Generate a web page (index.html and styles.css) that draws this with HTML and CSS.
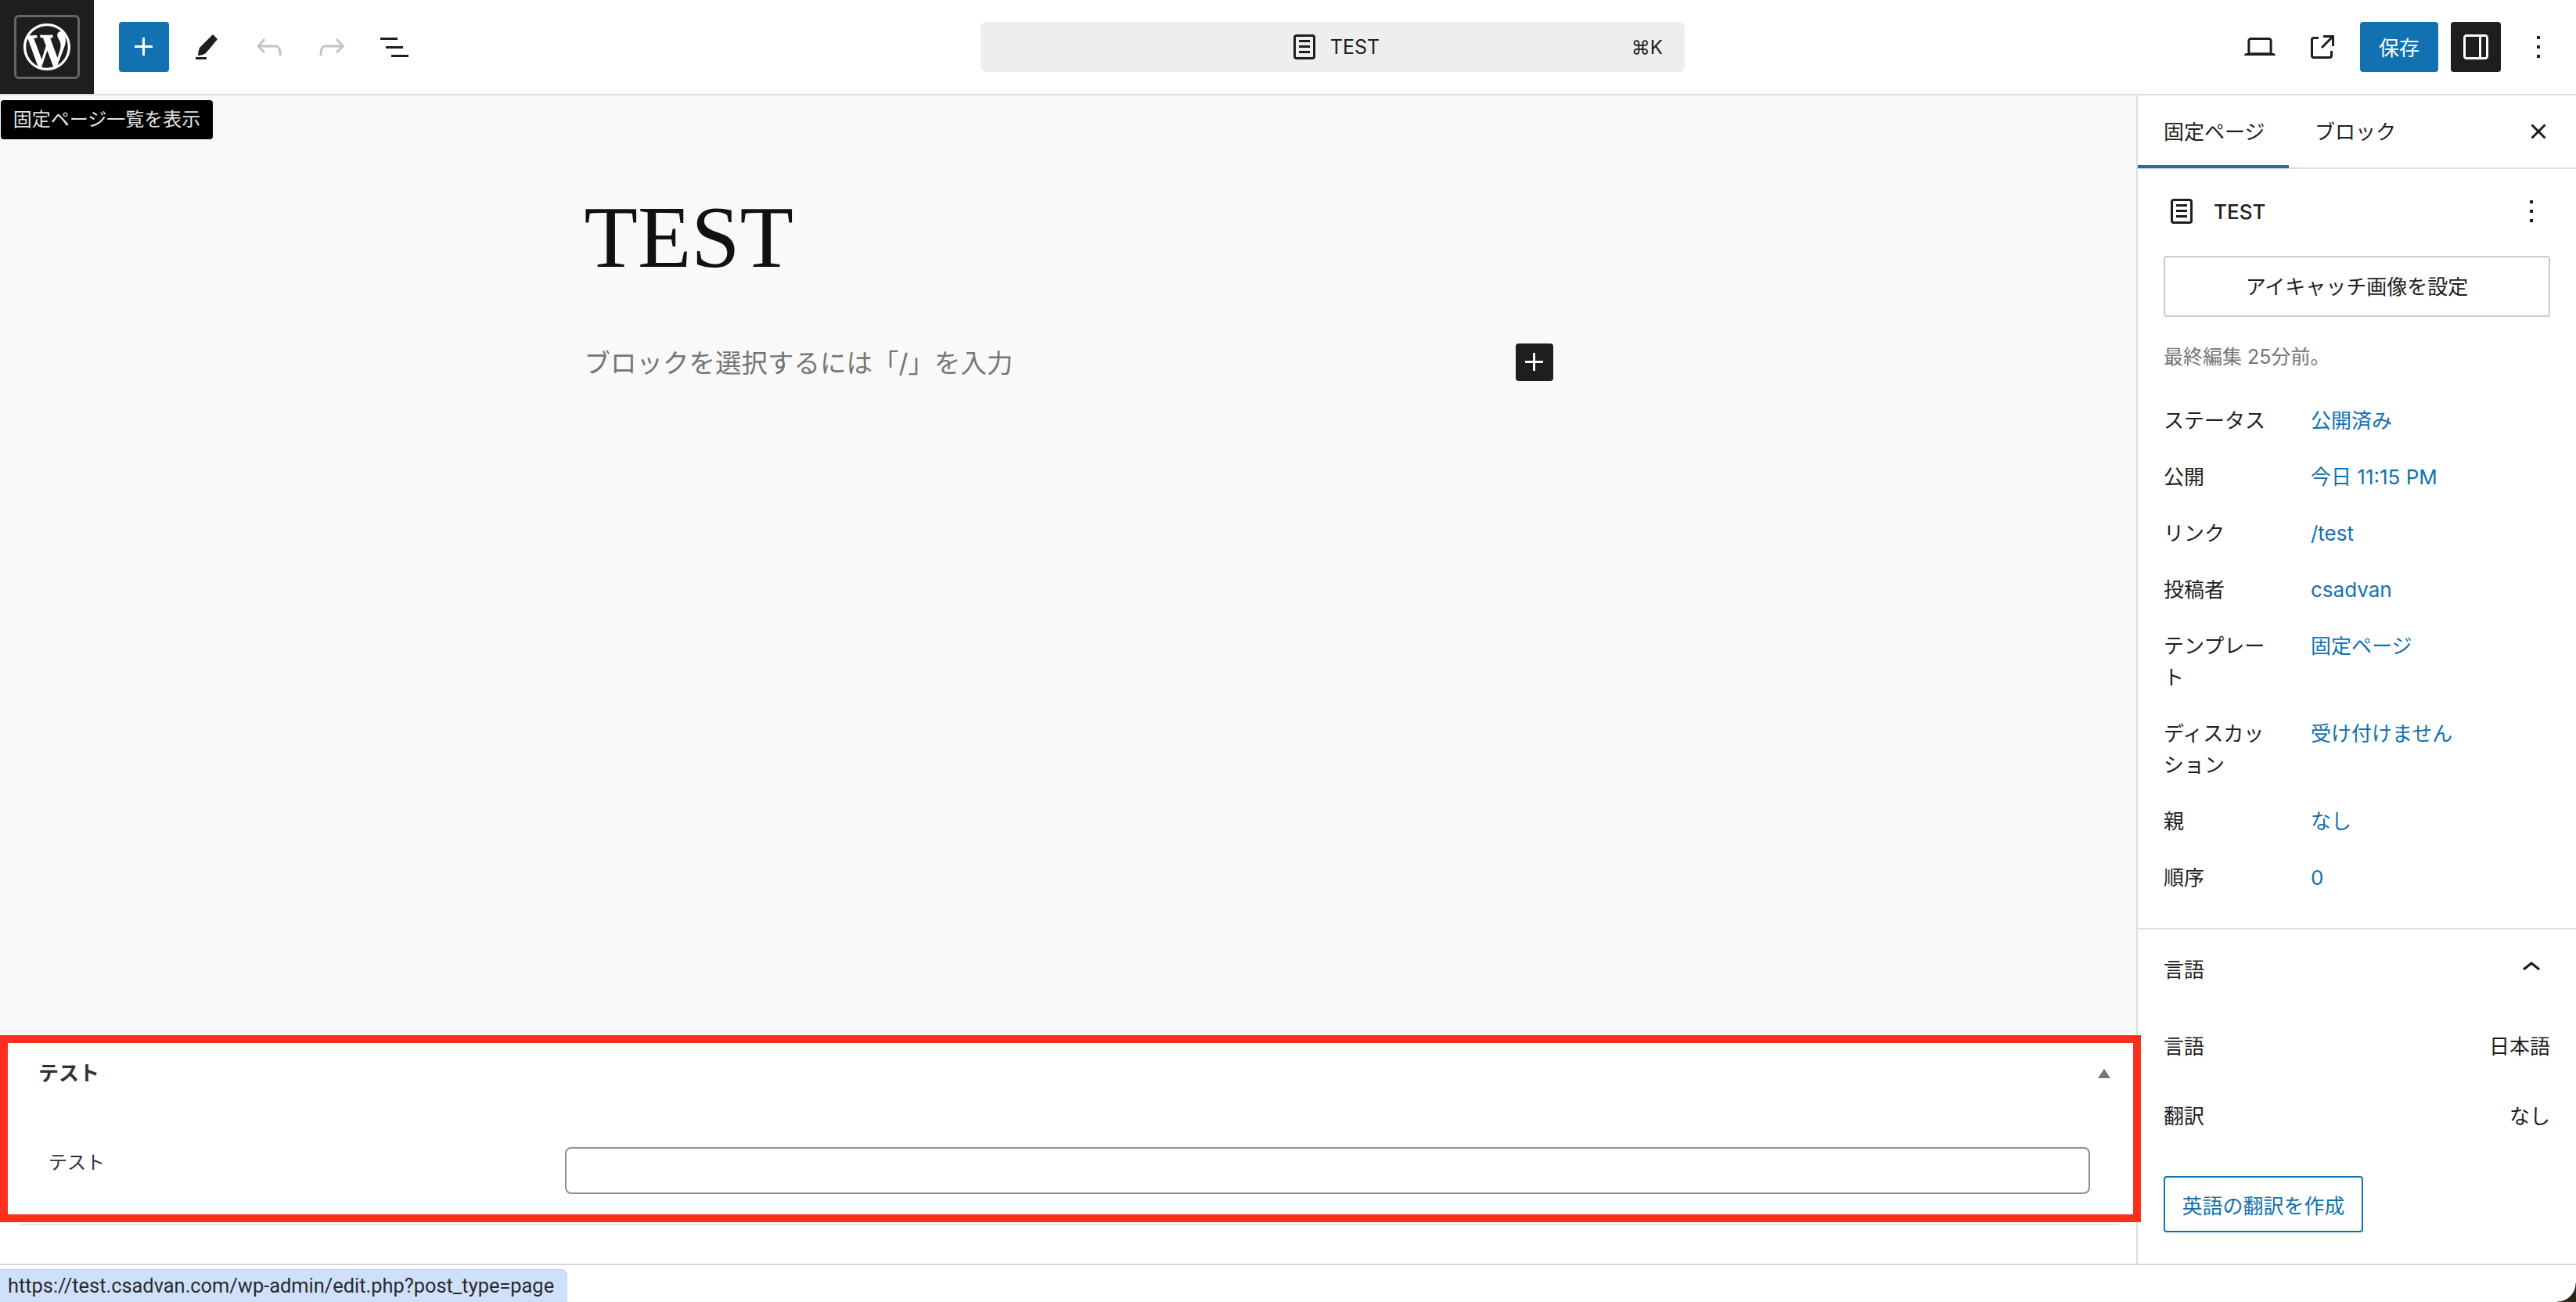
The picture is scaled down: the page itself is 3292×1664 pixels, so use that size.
FILE: index.html
```html
<!DOCTYPE html>
<html lang="ja">
<head>
    <meta charset="UTF-8">
    <title>TEST</title>
    <link rel="stylesheet" href="styles.css">
</head>
<body>
    <header class="topbar">
        <a class="site-logo">
            <span class="site-logo-box">
                <svg class="site-logo-mark" viewBox="0 0 20 20"><path d="M20 10c0-5.51-4.49-10-10-10C4.48 0 0 4.49 0 10c0 5.52 4.48 10 10 10 5.51 0 10-4.48 10-10zM7.78 15.37L4.37 6.22c.55-.02 1.17-.08 1.17-.08.5-.06.44-1.13-.06-1.11 0 0-1.45.11-2.37.11-.18 0-.37 0-.58-.01C4.12 2.69 6.87 1.11 10 1.11c2.33 0 4.45.87 6.05 2.34-.68-.11-1.65.39-1.65 1.58 0 .74.45 1.36.9 2.1.35.61.55 1.36.55 2.46 0 1.49-1.4 5-1.4 5l-3.03-8.37c.54-.02.82-.17.82-.17.5-.05.44-1.25-.06-1.22 0 0-1.44.12-2.38.12-.87 0-2.33-.12-2.33-.12-.5-.03-.56 1.2-.06 1.22l.92.08 1.26 3.41zM17.41 10c.24-.64.74-1.87.43-4.25.7 1.29 1.05 2.71 1.05 4.25 0 3.29-1.73 6.24-4.4 7.78.97-2.59 1.94-5.2 2.92-7.78zM6.1 18.09C3.12 16.65 1.11 13.53 1.11 10c0-1.3.23-2.48.72-3.59C3.25 10.3 4.67 14.2 6.1 18.09zm4.03-6.63l2.58 6.98c-.86.29-1.76.45-2.71.45-.79 0-1.57-.11-2.29-.33.81-2.38 1.62-4.74 2.42-7.1z"/></svg>
            </span>
        </a>
        <div class="tools">
            <button class="icon-btn icon-btn-primary"><svg viewBox="0 0 24 24"><path d="M11 12.5V17.5H12.5V12.5H17.5V11H12.5V6H11V11H6V12.5H11Z"/></svg></button>
            <button class="icon-btn"><svg viewBox="0 0 24 24"><path d="M16 4l3 3-7.5 9q-2 1.5-5 1.5 0-2.500 1-5zM5 18.500h7V20H5z"/></svg></button>
            <button class="icon-btn icon-btn-off"><svg viewBox="0 0 24 24"><path d="M18.3 11.700c-.6-.6-1.400-.9-2.300-.9H6.700l2.900-3.300-1.100-1-4.500 5L8.500 16l1-1-2.700-2.700H16c.5 0 .9.2 1.300.5 1 1 1 3.400 1 4.500v.3h1.500v-.2c0-1.500 0-4.300-1.500-5.700z"/></svg></button>
            <button class="icon-btn icon-btn-off"><svg viewBox="0 0 24 24"><path d="M15.600 6.500l-1.100 1 2.900 3.300H8c-.9 0-1.700.3-2.300.9-1.400 1.500-1.400 4.200-1.400 5.600v.2h1.500v-.3c0-1.100 0-3.500 1-4.500.3-.3.7-.5 1.300-.5h9.200L14.500 15l1.100 1.100 4.600-4.600-4.600-5z"/></svg></button>
            <button class="icon-btn"><svg viewBox="0 0 24 24"><path d="M3 6h11v1.500H3V6Zm3.500 5.500h11V13h-11v-1.500ZM21 17H10v1.500h11V17Z"/></svg></button>
        </div>
        <div class="command-bar">
            <span class="command-title">
                <svg class="page-icon" viewBox="0 0 24 24"><path fill-rule="evenodd" d="M15.500 7.500h-7V9h7V7.500Zm-7 3.500h7v1.500h-7V11Zm7 3.500h-7V16h7v-1.500ZM17 4H7a2 2 0 0 0-2 2v12a2 2 0 0 0 2 2h10a2 2 0 0 0 2-2V6a2 2 0 0 0-2-2Zm0 1.500H7a.5.5 0 0 0-.5.5v12a.5.5 0 0 0 .5.5h10a.5.5 0 0 0 .5-.5V6a.5.5 0 0 0-.5-.5Z"/></svg>
                TEST
            </span>
            <span class="command-key">⌘K</span>
        </div>
        <div class="actions">
            <button class="icon-btn"><svg viewBox="0 0 24 24"><path d="M20.500 16h-.7V8c0-1.100-.9-2-2-2H6.200c-1.100 0-2 .9-2 2v8h-.7c-.8 0-1.500.7-1.500 1.500h20c0-.8-.7-1.500-1.500-1.500zM5.700 8c0-.3.2-.5.5-.5h11.600c.3 0 .5.2.5.5v7.600H5.700V8z"/></svg></button>
            <button class="icon-btn"><svg viewBox="0 0 24 24"><path d="M19.500 4.500h-7V6h4.440l-5.970 5.970 1.060 1.060L18 7.060v4.440h1.500v-7Zm-13 1a2 2 0 0 0-2 2v10a2 2 0 0 0 2 2h10a2 2 0 0 0 2-2v-3H17v3a.5.5 0 0 1-.5.5h-10a.5.5 0 0 1-.5-.5v-10a.5.5 0 0 1 .5-.5h3V5.500h-3Z"/></svg></button>
            <button class="save-btn">保存</button>
            <button class="icon-btn icon-btn-dark"><svg viewBox="0 0 24 24"><path d="M18 4H6c-1.100 0-2 .9-2 2v12c0 1.100.9 2 2 2h12c1.100 0 2-.9 2-2V6c0-1.100-.9-2-2-2zm-4 14.500H6c-.3 0-.5-.2-.5-.5V6c0-.3.2-.5.5-.5h8v13zm4.500-.5c0 .3-.2.5-.5.5h-2.500v-13H18c.3 0 .5.2.5.5v12z"/></svg></button>
            <button class="icon-btn"><svg viewBox="0 0 24 24"><path d="M13 19h-2v-2h2v2zm0-6h-2v-2h2v2zm0-6h-2V5h2v2z"/></svg></button>
        </div>
    </header>

    <div class="tooltip">固定ページ一覧を表示</div>

    <div class="workspace">
        <main class="editor">
            <div class="canvas">
                <div class="canvas-column">
                    <h1 class="post-title">TEST</h1>
                    <div class="appender">
                        <span class="appender-text">ブロックを選択するには「/」を入力</span>
                        <button class="appender-btn"><svg viewBox="0 0 24 24"><path d="M11 12.500V17.500H12.500V12.500H17.500V11H12.500V6H11V11H6V12.500H11Z"/></svg></button>
                    </div>
                </div>
            </div>
            <section class="metabox">
                <div class="metabox-head">
                    <h2>テスト</h2>
                    <span class="metabox-toggle"></span>
                </div>
                <div class="metabox-field">
                    <label for="test-field">テスト</label>
                    <input type="text" id="test-field">
                </div>
            </section>
            <div class="metabox-rule"></div>
        </main>

        <aside class="sidebar">
            <div class="tabs">
                <span class="tab tab-active">固定ページ</span>
                <span class="tab">ブロック</span>
                <button class="tabs-close"><svg viewBox="0 0 24 24"><path d="M12 13.060l3.712 3.713 1.061-1.060L13.061 12l3.712-3.712-1.060-1.060L12 10.938 8.288 7.227l-1.061 1.060L10.939 12l-3.712 3.712 1.060 1.061L12 13.061z"/></svg></button>
            </div>

            <div class="panel">
                <div class="summary-head">
                    <svg class="page-icon" viewBox="0 0 24 24"><path fill-rule="evenodd" d="M15.500 7.500h-7V9h7V7.500Zm-7 3.500h7v1.500h-7V11Zm7 3.500h-7V16h7v-1.500ZM17 4H7a2 2 0 0 0-2 2v12a2 2 0 0 0 2 2h10a2 2 0 0 0 2-2V6a2 2 0 0 0-2-2Zm0 1.500H7a.5.5 0 0 0-.5.5v12a.5.5 0 0 0 .5.5h10a.5.5 0 0 0 .5-.5V6a.5.5 0 0 0-.5-.5Z"/></svg>
                    <span class="summary-title">TEST</span>
                    <svg class="summary-more" viewBox="0 0 24 24"><path d="M13 19h-2v-2h2v2zm0-6h-2v-2h2v2zm0-6h-2V5h2v2z"/></svg>
                </div>
                <button class="featured-btn">アイキャッチ画像を設定</button>
                <p class="last-edit">最終編集 25分前。</p>
                <div class="rows">
                    <div class="row"><span class="row-label">ステータス</span><a class="row-value">公開済み</a></div>
                    <div class="row"><span class="row-label">公開</span><a class="row-value">今日 11:15 PM</a></div>
                    <div class="row"><span class="row-label">リンク</span><a class="row-value">/test</a></div>
                    <div class="row"><span class="row-label">投稿者</span><a class="row-value">csadvan</a></div>
                    <div class="row"><span class="row-label">テンプレート</span><a class="row-value">固定ページ</a></div>
                    <div class="row"><span class="row-label">ディスカッション</span><a class="row-value">受け付けません</a></div>
                    <div class="row"><span class="row-label">親</span><a class="row-value">なし</a></div>
                    <div class="row"><span class="row-label">順序</span><a class="row-value">0</a></div>
                </div>
            </div>

            <div class="panel panel-lang">
                <div class="lang-head">
                    <span>言語</span>
                    <svg class="lang-chevron" viewBox="0 0 24 24"><path d="M6.500 12.400L12 8l5.500 4.400-.9 1.200L12 10l-4.500 3.600-1-1.200z"/></svg>
                </div>
                <div class="lang-row lang-row-first"><span>言語</span><span>日本語</span></div>
                <div class="lang-row"><span>翻訳</span><span>なし</span></div>
                <button class="translate-btn">英語の翻訳を作成</button>
            </div>
        </aside>
    </div>

    <div class="bottom-strip"></div>
    <div class="status-bubble">https://test.csadvan.com/wp-admin/edit.php?post_type=page</div>
    <div class="red-frame"></div>
    <div class="window-corner"></div>
</body>
</html>
```
FILE: styles.css
```css
* {
    box-sizing: border-box;
}
body {
    position: relative;
    display: flex;
    flex-direction: column;
    width: 3292px;
    height: 1664px;
    margin: 0;
    overflow: hidden;
    background: #fff;
    color: #1e1e1e;
    font-family: Inter, "Noto Sans CJK JP", sans-serif;
    font-size: 26px;
}
button {
    padding: 0;
    border: none;
    background: none;
    color: inherit;
    font: inherit;
}
svg {
    display: block;
    fill: currentColor;
}

/* top bar */
.topbar {
    display: flex;
    flex: none;
    align-items: center;
    height: 122px;
    border-bottom: 2px solid #ddd;
}
.site-logo {
    display: flex;
    flex: none;
    align-items: center;
    justify-content: center;
    width: 120px;
    height: 120px;
    background: #1e1e1e;
}
.site-logo-box {
    display: flex;
    align-items: center;
    justify-content: center;
    width: 84px;
    height: 82px;
    border: 3px solid #666;
    border-radius: 6px;
}
.site-logo-mark {
    width: 60px;
    height: 60px;
    fill: #fff;
}
.tools,
.actions {
    display: flex;
    flex: none;
    gap: 16px;
}
.tools {
    padding-left: 32px;
}
.actions {
    margin-left: auto;
    padding-right: 16px;
}
.icon-btn {
    display: flex;
    align-items: center;
    justify-content: center;
    width: 64px;
    height: 64px;
    border-radius: 4px;
}
.icon-btn svg {
    width: 48px;
    height: 48px;
}
.icon-btn-primary {
    background: #1271b0;
    color: #fff;
}
.icon-btn-off {
    color: #c4c4c4;
}
.icon-btn-dark {
    background: #1e1e1e;
    color: #fff;
}
.save-btn {
    width: 100px;
    height: 64px;
    padding-bottom: 2px;
    border-radius: 4px;
    background: #1271b0;
    color: #fff;
}
.command-bar {
    position: relative;
    display: flex;
    flex: none;
    align-items: center;
    justify-content: center;
    width: 900px;
    height: 64px;
    margin-left: 717px;
    border-radius: 8px;
    background: #eee;
    font-size: 25px;
}
.command-title {
    display: flex;
    align-items: center;
    gap: 9px;
}
.command-key {
    position: absolute;
    right: 28px;
    font-size: 24px;
}
.page-icon {
    width: 48px;
    height: 48px;
}
.tooltip {
    position: absolute;
    top: 128px;
    left: 1px;
    width: 271px;
    height: 50px;
    border-radius: 4px;
    background: #000;
    color: #e4e4e4;
    font-size: 24px;
    line-height: 50px;
    text-align: center;
}

/* editor */
.workspace {
    display: flex;
    flex: 1;
    min-height: 0;
}
.editor {
    display: flex;
    flex: 1;
    flex-direction: column;
    min-width: 0;
}
.canvas {
    flex: 1;
    display: flex;
    justify-content: center;
    background: #f9f9f9;
}
.canvas-column {
    width: 1240px;
    margin-left: 3px;
    padding-top: 116px;
}
.post-title {
    margin: 0;
    color: #111;
    font-family: "Liberation Serif", serif;
    font-size: 112px;
    font-weight: 400;
    line-height: 130px;
}
.appender {
    display: flex;
    align-items: center;
    justify-content: space-between;
    height: 48px;
    margin-top: 71px;
}
.appender-text {
    padding-bottom: 4px;
    color: #757575;
    font-size: 33.5px;
}
.appender-btn {
    display: flex;
    align-items: center;
    justify-content: center;
    width: 48px;
    height: 48px;
    margin-right: 2px;
    border-radius: 4px;
    background: #1e1e1e;
    color: #fff;
}
.appender-btn svg {
    width: 48px;
    height: 48px;
}
.metabox {
    flex: none;
    height: 236px;
    background: #fff;
    color: #2c3338;
}
.metabox-head {
    display: flex;
    align-items: center;
    justify-content: space-between;
    height: 40px;
    margin-top: 24px;
    padding: 0 33px 0 49px;
}
.metabox-head h2 {
    margin: -6px 0 0;
    font-size: 26px;
    font-weight: 700;
}
.metabox-toggle {
    width: 0;
    height: 0;
    border-right: 8px solid transparent;
    border-bottom: 12px solid #72777c;
    border-left: 8px solid transparent;
}
.metabox-field {
    display: flex;
    align-items: flex-start;
    margin-top: 74px;
    padding: 0 59px 0 62px;
}
.metabox-field label {
    width: 660px;
    padding-top: 2px;
    font-size: 24px;
    line-height: 36px;
}
.metabox-field input {
    flex: 1;
    height: 60px;
    border: 2px solid #8c8f94;
    border-radius: 8px;
    background: #fff;
}
.metabox-rule {
    flex: none;
    height: 2px;
    margin: 0 22px 49px 24px;
    background: #e6e6e6;
}

/* sidebar */
.sidebar {
    flex: none;
    width: 562px;
    border-left: 2px solid #ddd;
    background: #fff;
}
.tabs {
    display: flex;
    align-items: center;
    height: 94px;
    border-bottom: 2px solid #ddd;
}
.tab {
    display: flex;
    align-items: center;
    height: 94px;
    padding: 0 32px 4px;
}
.tab-active {
    width: 193px;
    padding: 0 0 0 33px;
    border-bottom: 4px solid #1271b0;
}
.tab:nth-child(2) {
    padding-left: 33px;
}
.tabs-close {
    width: 48px;
    height: 48px;
    margin-left: auto;
    margin-right: 24px;
}
.tabs-close svg {
    width: 48px;
    height: 48px;
}
.panel {
    padding: 34px 33px 44px;
    border-bottom: 2px solid #e0e0e0;
}
.summary-head {
    display: flex;
    align-items: center;
    height: 40px;
}
.summary-head .page-icon {
    margin-left: -1px;
}
.summary-title {
    margin-left: 17px;
    font-weight: 500;
}
.summary-more {
    width: 48px;
    height: 48px;
    margin-left: auto;
}
.featured-btn {
    width: 100%;
    height: 78px;
    margin-top: 37px;
    padding-bottom: 3px;
    border: 2px solid #ccc;
    border-radius: 4px;
}
.last-edit {
    margin: 31px 0 42px;
    color: #757575;
    font-size: 25px;
    line-height: 40px;
}
.rows {
    display: flex;
    flex-direction: column;
    gap: 32px;
}
.row {
    display: flex;
    line-height: 40px;
}
.row-label {
    flex: none;
    width: 150px;
    margin-right: 38px;
}
.row-value {
    color: #1271b0;
}
.panel-lang {
    padding: 29px 33px 0;
    border-bottom: none;
}
.lang-head,
.lang-row {
    display: flex;
    align-items: center;
    justify-content: space-between;
    height: 40px;
}
.lang-chevron {
    width: 48px;
    height: 48px;
}
.lang-row-first {
    margin-top: 58px;
}
.lang-row + .lang-row {
    margin-top: 49px;
}
.translate-btn {
    display: block;
    width: 255px;
    height: 72px;
    margin-top: 59px;
    border: 2px solid #1271b0;
    border-radius: 4px;
    color: #1271b0;
}

/* bottom of the window */
.bottom-strip {
    flex: none;
    height: 49px;
    border-top: 2px solid #d4d4d4;
    background: #fff;
}
.status-bubble {
    position: absolute;
    bottom: 0;
    left: 0;
    width: 725px;
    height: 42px;
    padding-left: 10px;
    border: 1px solid #c3d3ea;
    border-width: 1px 1px 0 0;
    border-radius: 0 8px 0 0;
    background: #cfe0fa;
    color: #2a2a2a;
    font-family: Roboto, sans-serif;
    font-size: 25.4px;
    line-height: 40px;
    white-space: nowrap;
}
.red-frame {
    position: absolute;
    top: 1323px;
    left: 0;
    width: 2736px;
    height: 239px;
    border: 10px solid #fe2e1e;
}
.window-corner {
    position: absolute;
    right: 0;
    bottom: 0;
    width: 24px;
    height: 24px;
    background: radial-gradient(circle at 0 0, #fff 23px, #2a2318 24px);
}
```
